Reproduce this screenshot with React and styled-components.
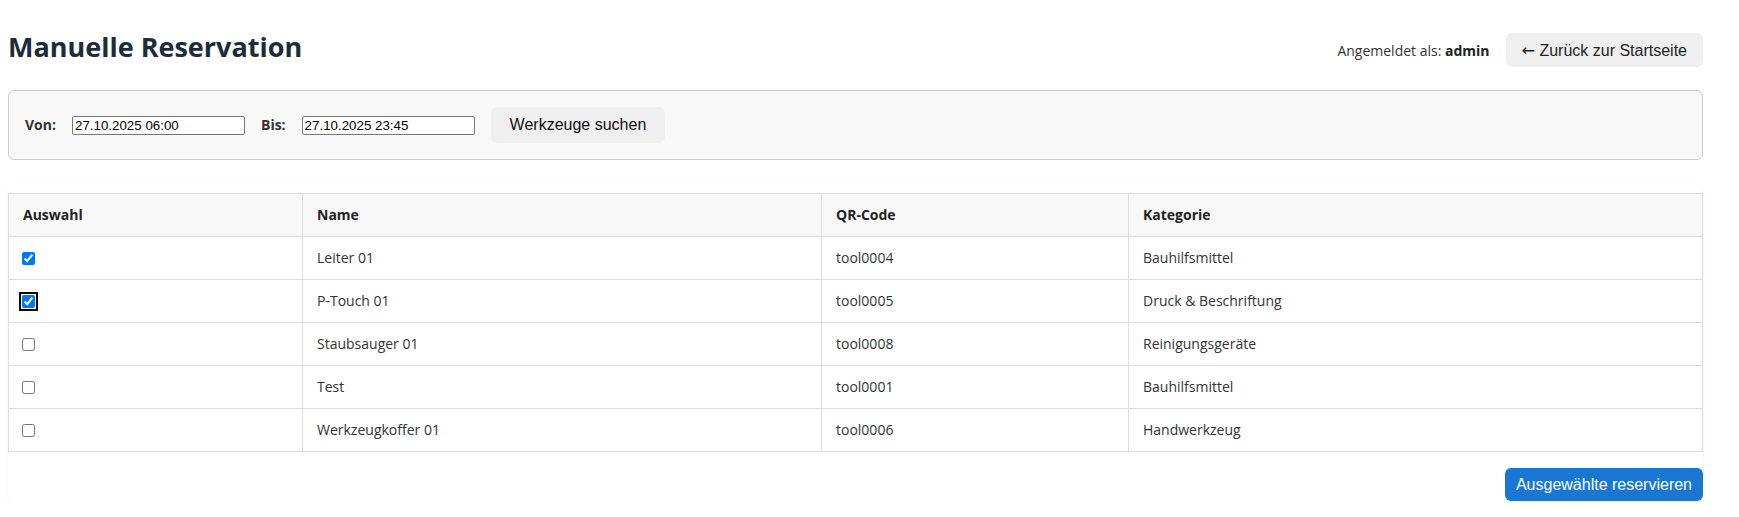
import React, { useState } from 'react'
import styled, { createGlobalStyle } from 'styled-components'

const GlobalStyle = createGlobalStyle`
  body {
    margin: 0;
    background: #fff;
    font-family: "Segoe UI", "Open Sans", "Noto Sans", sans-serif;
    color: #333;
  }
`

const tools = [
  { id: 1, name: 'Leiter 01', qr: 'tool0004', category: 'Bauhilfsmittel', checked: true },
  { id: 2, name: 'P-Touch 01', qr: 'tool0005', category: 'Druck & Beschriftung', checked: true, focused: true },
  { id: 3, name: 'Staubsauger 01', qr: 'tool0008', category: 'Reinigungsgeräte', checked: false },
  { id: 4, name: 'Test', qr: 'tool0001', category: 'Bauhilfsmittel', checked: false },
  { id: 5, name: 'Werkzeugkoffer 01', qr: 'tool0006', category: 'Handwerkzeug', checked: false },
]

export default function App() {
  const [selected, setSelected] = useState(
    tools.reduce((acc, t) => ({ ...acc, [t.id]: t.checked }), {})
  )

  const toggle = (id) => setSelected({ ...selected, [id]: !selected[id] })

  return (
    <>
      <GlobalStyle />
      <Page>
        <Header>
          <Title>Manuelle Reservation</Title>
          <UserArea>
            <UserInfo>
              Angemeldet als: <b>admin</b>
            </UserInfo>
            <GreyButton>
              <Arrow>←</Arrow> Zurück zur Startseite
            </GreyButton>
          </UserArea>
        </Header>

        <FilterCard>
          <Label>Von:</Label>
          <DateInput defaultValue="27.10.2025 06:00" />
          <Label>Bis:</Label>
          <DateInput defaultValue="27.10.2025 23:45" />
          <SearchButton>Werkzeuge suchen</SearchButton>
        </FilterCard>

        <TableCard>
          <Table>
            <colgroup>
              <col style={{ width: 294 }} />
              <col style={{ width: 519 }} />
              <col style={{ width: 307 }} />
              <col />
            </colgroup>
            <thead>
              <tr>
                <Th>Auswahl</Th>
                <Th>Name</Th>
                <Th>QR-Code</Th>
                <Th>Kategorie</Th>
              </tr>
            </thead>
            <tbody>
              {tools.map((tool) => (
                <tr key={tool.id}>
                  <Td>
                    <Check
                      type="checkbox"
                      checked={selected[tool.id]}
                      onChange={() => toggle(tool.id)}
                      $focused={tool.focused}
                    />
                  </Td>
                  <Td>{tool.name}</Td>
                  <Td>{tool.qr}</Td>
                  <Td>{tool.category}</Td>
                </tr>
              ))}
            </tbody>
          </Table>
          <Actions>
            <PrimaryButton>Ausgewählte reservieren</PrimaryButton>
          </Actions>
        </TableCard>
      </Page>
    </>
  )
}

const Page = styled.div`
  max-width: 1695px;
  padding: 0 0 0 8px;
`

const Header = styled.div`
  display: flex;
  align-items: center;
  justify-content: space-between;
  padding: 26px 0 23px;
`

const Title = styled.h1`
  margin: 0;
  font-size: 27px;
  font-weight: 700;
  color: #1e2b3a;
`

const UserArea = styled.div`
  display: flex;
  align-items: center;
  gap: 16px;
  margin-top: 7px;
`

const UserInfo = styled.span`
  font-size: 14px;
  color: #333;

  b {
    color: #222;
  }
`

const GreyButton = styled.button`
  height: 34px;
  padding: 0 16px;
  border: none;
  border-radius: 6px;
  background: #efefef;
  font-family: "Liberation Sans", Arial, sans-serif;
  font-size: 16px;
  color: #222;
  cursor: pointer;
`

const Arrow = styled.span`
  font-family: "DejaVu Sans", sans-serif;
  font-size: 16px;
`

const FilterCard = styled.div`
  display: flex;
  align-items: center;
  gap: 16px;
  height: 70px;
  box-sizing: border-box;
  padding: 0 16px;
  background: #f8f8f8;
  border: 1px solid #ccc;
  border-radius: 6px;
`

const Label = styled.label`
  font-size: 14px;
  font-weight: 700;
  color: #333;
  margin-top: -2px;
`

const DateInput = styled.input`
  width: 173px;
  height: 19px;
  box-sizing: border-box;
  padding: 0 2px;
  border: 1px solid #767676;
  border-radius: 2px;
  font-family: "Liberation Sans", Arial, sans-serif;
  font-size: 13.33px;
  color: #000;
  background: #fff;
`

const SearchButton = styled(GreyButton)`
  height: 36px;
  padding: 0 19px;
  color: #111;
`

const TableCard = styled.div`
  margin-top: 24px;
  padding-top: 9px;
  background: #fff;
  border-radius: 8px;
  box-shadow: 0 1px 4px rgba(0, 0, 0, 0.06);
`

const Table = styled.table`
  width: 100%;
  table-layout: fixed;
  border-collapse: collapse;
  font-size: 14px;
  line-height: 18px;
`

const Th = styled.th`
  padding: 12px 14px;
  text-align: left;
  font-weight: 700;
  color: #222;
  background: #f8f8f8;
  border: 1px solid #ddd;
`

const Td = styled.td`
  height: 18px;
  padding: 12px 14px;
  color: #333;
  border: 1px solid #ddd;
  vertical-align: middle;
`

const Check = styled.input`
  display: block;
  width: 13px;
  height: 13px;
  margin: 0 0 0 -1px;
  outline: ${(p) => (p.$focused ? '2px solid #000' : 'none')};
  outline-offset: 1px;
  border-radius: 2px;
`

const Actions = styled.div`
  display: flex;
  justify-content: flex-end;
  padding-top: 16px;
`

const PrimaryButton = styled.button`
  height: 33px;
  padding: 0 11px;
  border: none;
  border-radius: 6px;
  background: #1976d2;
  color: #fff;
  font-family: "Liberation Sans", Arial, sans-serif;
  font-size: 16px;
  cursor: pointer;
`
